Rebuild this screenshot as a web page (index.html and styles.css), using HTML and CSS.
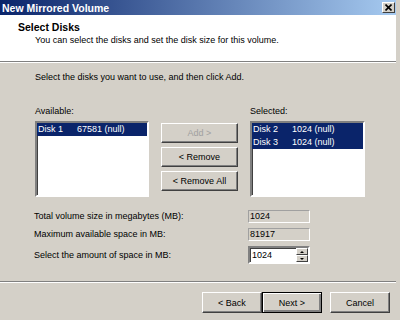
FILE: index.html
```html
<!DOCTYPE html>
<html lang="en">
<head>
    <meta charset="UTF-8">
    <title>New Mirrored Volume</title>
    <link rel="stylesheet" href="styles.css">
</head>
<body>

<div class="window">
    <div class="titlebar">
        <span class="title">New Mirrored Volume</span>
        <button class="close-btn">
            <svg width="7" height="7" viewBox="0 0 7 7"><path d="M0.5 0.5 L6.5 6.5 M6.5 0.5 L0.5 6.5" stroke="#000" stroke-width="1.6"/></svg>
        </button>
    </div>

    <div class="wizard-header">
        <div class="step-title">Select Disks</div>
        <div class="step-desc">You can select the disks and set the disk size for this volume.</div>
    </div>

    <div class="wizard-body">
        <p class="intro">Select the disks you want to use, and then click Add.</p>

        <div class="picker">
            <div class="pick-col">
                <label>Available:</label>
                <ul class="listbox">
                    <li class="selected"><span class="disk">Disk 1</span>67581 (null)</li>
                </ul>
            </div>
            <div class="move-buttons">
                <button class="btn" disabled>Add &gt;</button>
                <button class="btn">&lt; Remove</button>
                <button class="btn">&lt; Remove All</button>
            </div>
            <div class="pick-col">
                <label>Selected:</label>
                <ul class="listbox">
                    <li class="selected"><span class="disk">Disk 2</span>1024 (null)</li>
                    <li class="selected"><span class="disk">Disk 3</span>1024 (null)</li>
                </ul>
            </div>
        </div>

        <div class="sizes">
            <span>Total volume size in megabytes (MB):</span>
            <div class="readonly">1024</div>
            <span>Maximum available space in MB:</span>
            <div class="readonly">81917</div>
            <span>Select the amount of space in MB:</span>
            <div class="spinner">
                <span class="spin-value">1024</span>
                <div class="spin-arrows">
                    <div class="arrow up"></div>
                    <div class="arrow down"></div>
                </div>
            </div>
        </div>
    </div>

    <div class="wizard-footer">
        <button class="btn">&lt; Back</button>
        <button class="btn default">Next &gt;</button>
        <button class="btn cancel">Cancel</button>
    </div>
</div>

</body>
</html>
```

FILE: styles.css
```css
body {
    margin: 0;
    font-family: 'Liberation Sans', Arial, sans-serif;
    font-size: 9px;
    color: #000000;
    background-color: #d4d0c8;
}
.window {
    width: 396px;
    height: 318px;
    border-right: 4px solid #d4d0c8;
    border-bottom: 2px solid #d4d0c8;
    box-shadow: 1px 0 0 #808080, 0 1px 0 #808080;
    display: flex;
    flex-direction: column;
    background-color: #d4d0c8;
}
.titlebar {
    height: 15px;
    background: linear-gradient(to right, #0a246a, #a6caf0);
    display: flex;
    align-items: center;
    justify-content: space-between;
    padding: 0 1px 0 2px;
}
.title {
    color: #ffffff;
    font-weight: bold;
    font-size: 10.5px;
}
.close-btn {
    width: 13px;
    height: 11px;
    padding: 0;
    background-color: #d4d0c8;
    border: 1px solid;
    border-color: #ffffff #404040 #404040 #ffffff;
    display: flex;
    align-items: center;
    justify-content: center;
}
.wizard-header {
    height: 47px;
    box-sizing: border-box;
    background-color: #ffffff;
    padding: 6px 0 0 18px;
    border-bottom: 1px solid #808080;
    box-shadow: 0 1px 0 #ffffff;
    line-height: 13px;
}
.step-title {
    font-weight: bold;
    font-size: 10.5px;
}
.step-desc {
    padding-left: 17px;
}
.wizard-body {
    flex: 1;
    padding: 9px 0 0 35px;
    line-height: 13px;
}
.intro {
    margin: 0 0 21px 0;
}
.picker {
    display: grid;
    grid-template-columns: 114px 77px 115px;
    column-gap: 12px;
}
.pick-col label {
    display: block;
    margin-bottom: 3px;
}
.listbox {
    list-style: none;
    margin: 0;
    padding: 0;
    height: 76px;
    box-sizing: border-box;
    background-color: #ffffff;
    border: 2px solid;
    border-color: #808080 #ffffff #ffffff #808080;
    box-shadow: inset 1px 1px 0 #404040;
}
.listbox li {
    height: 13px;
    padding-left: 1px;
    line-height: 13px;
}
.listbox li.selected {
    background-color: #0a246a;
    color: #ffffff;
}
.listbox .disk {
    display: inline-block;
    width: 39px;
}
.move-buttons {
    display: flex;
    flex-direction: column;
    gap: 4px;
    padding-top: 18px;
}
.btn {
    font-family: inherit;
    font-size: 9px;
    height: 20px;
    padding: 0;
    background-color: #d4d0c8;
    color: #000000;
    border: 1px solid;
    border-color: #ffffff #404040 #404040 #ffffff;
    box-shadow: inset -1px -1px 0 #808080;
}
.btn:disabled {
    color: #a0a0a0;
}
.sizes {
    display: grid;
    grid-template-columns: 214px 62px;
    row-gap: 5px;
    align-items: center;
    margin-top: 13px;
    margin-left: -1px;
}
.readonly {
    height: 13px;
    box-sizing: border-box;
    border: 1px solid;
    border-color: #a0a0a0 #ffffff #ffffff #a0a0a0;
    line-height: 11px;
    padding-left: 1px;
}
.spinner {
    height: 18px;
    box-sizing: border-box;
    background-color: #ffffff;
    border: 2px solid;
    border-color: #808080 #ffffff #ffffff #808080;
    box-shadow: inset 1px 1px 0 #404040;
    display: flex;
    align-items: center;
    justify-content: space-between;
    padding-left: 2px;
}
.spin-arrows {
    width: 12px;
    height: 14px;
    display: flex;
    flex-direction: column;
}
.arrow {
    flex: 1;
    box-sizing: border-box;
    background-color: #d4d0c8;
    border: 1px solid;
    border-color: #ffffff #404040 #404040 #ffffff;
    display: flex;
    align-items: center;
    justify-content: center;
}
.arrow::after {
    content: "";
    border-left: 2px solid transparent;
    border-right: 2px solid transparent;
}
.arrow.up::after {
    border-bottom: 2px solid #000000;
}
.arrow.down::after {
    border-top: 2px solid #000000;
}
.wizard-footer {
    height: 37px;
    box-sizing: border-box;
    border-top: 1px solid #808080;
    box-shadow: inset 0 1px 0 #ffffff;
    display: flex;
    justify-content: flex-end;
    align-items: flex-start;
    padding: 10px 6px 0 0;
}
.wizard-footer .btn {
    width: 60px;
    height: 21px;
}
.wizard-footer .btn.default {
    border-color: #000000;
    box-shadow: inset 1px 1px 0 #ffffff, inset -2px -2px 0 #808080;
}
.wizard-footer .btn.cancel {
    margin-left: 8px;
}
```
